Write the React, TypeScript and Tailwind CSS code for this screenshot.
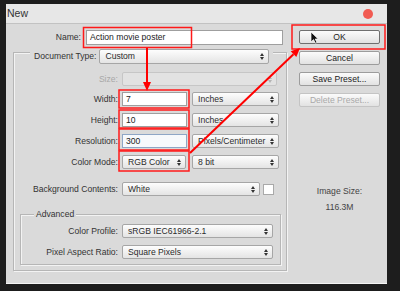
import React from "react";

const sel =
  "flex items-center justify-between pr-[4px] rounded-[2px] border border-[#a6a6a6] bg-gradient-to-b from-[#fdfdfd] to-[#e4e4e4] text-[#2b2b2b]";
const inp = "flex items-center bg-white border border-[#9f9f9f] text-[#222]";
const btn =
  "w-[81px] h-[14px] flex items-center justify-center rounded-[2px] border bg-gradient-to-b from-[#fbfbfb] to-[#e2e2e2]";

function Spin({ dim }: { dim?: boolean }) {
  return (
    <svg width="4" height="7" viewBox="0 0 4 7" className="shrink-0">
      <path d="M0 3 L2 0 L4 3 Z M0 4 L4 4 L2 7 Z" fill={dim ? "#b4b4b4" : "#333"} />
    </svg>
  );
}

function Select({ text, className }: { text: string; className: string }) {
  return (
    <div className={`${sel} ${className}`}>
      <span className="pl-[5px] whitespace-nowrap">{text}</span>
      <Spin />
    </div>
  );
}

function Row({ label, lw, children, className = "" }: { label: string; lw: string; children: React.ReactNode; className?: string }) {
  return (
    <div className={`flex items-center h-[14px] ${className}`}>
      <span className={`${lw} text-right text-[#333] whitespace-nowrap`}>{label}</span>
      <div className="ml-[4px] flex items-center">{children}</div>
    </div>
  );
}

export default function App() {
  return (
    <div className="relative w-[400px] h-[291px] bg-[#1d1d1d] overflow-hidden pl-[6px] pt-[4px] font-['Liberation_Sans',Arial,sans-serif] text-[8.6px] leading-none">
      <div className="w-[381px] h-[279px] bg-[#dadada] flex flex-col shadow-[0_1px_0_#f4f4f4]">
        {/* title bar */}
        <div className="h-[20px] shrink-0 bg-[#e7e7e7] border-b border-[#c2c2c2] flex items-center justify-between pl-[1px] pr-[14px]">
          <span className="text-[10.5px] text-[#333]">New</span>
          <div className="w-[10px] h-[10px] rounded-full bg-[#f15b52]" />
        </div>

        <div className="flex flex-1">
          {/* left */}
          <div className="w-[284px]">
            <div className="mt-[6px] flex items-center h-[15px]">
              <span className="w-[75px] text-right text-[#333]">Name:</span>
              <div className={`${inp} ml-[5px] w-[197px] h-[15px] pl-[3px]`}>Action movie poster</div>
            </div>

            <div className="mt-[7px] ml-[7px] w-[274px] h-[219px] border border-[#b6b6b6] shadow-[inset_1px_1px_0_#f3f3f3,1px_1px_0_#f3f3f3] flex flex-col">
              <div className="-mt-[4px] ml-[16px] w-fit px-[4px] bg-[#dadada] flex items-center h-[15px]">
                <span className="text-[#333]">Document Type:</span>
                <Select text="Custom" className="ml-[3px] w-[170px] h-[15px]" />
              </div>

              <Row label="Size:" lw="w-[104px] !text-[#a8a8a8]" className="mt-[8px]">
                <div className="w-[155px] h-[14px] rounded-[2px] border border-[#c6c6c6] bg-[#e2e2e2] flex items-center justify-end pr-[4px]">
                  <Spin dim />
                </div>
              </Row>

              <Row label="Width:" lw="w-[104px]" className="mt-[6px]">
                <div className={`${inp} w-[65px] h-[14px] pl-[3px]`}>7</div>
                <Select text="Inches" className="ml-[5px] w-[87px] h-[14px]" />
              </Row>

              <Row label="Height:" lw="w-[104px]" className="mt-[7px]">
                <div className={`${inp} w-[65px] h-[14px] pl-[3px]`}>10</div>
                <Select text="Inches" className="ml-[5px] w-[87px] h-[14px]" />
              </Row>

              <Row label="Resolution:" lw="w-[104px]" className="mt-[7px]">
                <div className="flex items-center w-[65px] h-[14px] pl-[3px] bg-[#f7f9fc] border border-[#8ea6c6] text-[#222]">300</div>
                <Select text="Pixels/Centimeter" className="ml-[5px] w-[87px] h-[14px]" />
              </Row>

              <Row label="Color Mode:" lw="w-[104px]" className="mt-[7px]">
                <Select text="RGB Color" className="w-[64px] h-[14px]" />
                <Select text="8 bit" className="ml-[6px] w-[87px] h-[14px]" />
              </Row>

              <Row label="Background Contents:" lw="w-[104px]" className="mt-[13px]">
                <Select text="White" className="w-[138px] h-[14px]" />
                <div className="ml-[3px] w-[11px] h-[11px] bg-white border border-[#a9a9a9]" />
              </Row>

              <div className="mt-[18px] ml-[6px] w-[261px] h-[51px] border border-[#b6b6b6] shadow-[inset_1px_1px_0_#f3f3f3,1px_1px_0_#f3f3f3] flex flex-col">
                <div className="-mt-[6px] ml-[13px] w-fit px-[2px] h-[11px] bg-[#dadada] flex items-center text-[#333]">Advanced</div>
                <Row label="Color Profile:" lw="w-[97px]" className="mt-[4px]">
                  <Select text="sRGB IEC61966-2.1" className="w-[151px] h-[14px]" />
                </Row>
                <Row label="Pixel Aspect Ratio:" lw="w-[97px]" className="mt-[7px]">
                  <Select text="Square Pixels" className="w-[151px] h-[14px]" />
                </Row>
              </div>
            </div>
          </div>

          {/* right */}
          <div className="flex-1 pl-[9px] flex flex-col">
            <div className={`${btn} mt-[6px] border-[#6f6f6f] text-[#222]`}>OK</div>
            <div className={`${btn} mt-[7px] border-[#9c9c9c] text-[#222]`}>Cancel</div>
            <div className={`${btn} mt-[7px] border-[#9c9c9c] text-[#222]`}>Save Preset...</div>
            <div className={`${btn} mt-[7px] border-[#c4c4c4] text-[#a9a9a9]`}>Delete Preset...</div>
            <div className="w-[81px] mt-[80px] text-center text-[#444]">Image Size:</div>
            <div className="w-[81px] mt-[7px] text-center text-[#444]">116.3M</div>
          </div>
        </div>
      </div>

      {/* annotations */}
      <svg className="absolute inset-0 pointer-events-none" width="400" height="291" viewBox="0 0 400 291">
        <g fill="none" stroke="#ff1a1a" strokeWidth="1.5">
          <rect x="83.5" y="27.5" width="108" height="20" />
          <rect x="119" y="90" width="70" height="18" />
          <rect x="119" y="110" width="70" height="18" />
          <rect x="119" y="129" width="70" height="21" />
          <rect x="119" y="151" width="70" height="20" />
          <rect x="292" y="25" width="93" height="24" />
        </g>
        <g stroke="#ff0000" strokeWidth="2" fill="#ff0000">
          <line x1="147" y1="48" x2="147" y2="83" />
          <line x1="190" y1="153" x2="293.5" y2="54.2" />
        </g>
        <polygon points="147,91 143,82 151,82" fill="#ff0000" />
        <polygon points="300,48 296.3,57.1 290.7,51.3" fill="#ff0000" />
        <path
          d="M0 0 L0 10 L2.5 7.6 L4.4 11.2 L6 10.4 L4.2 7 L7.2 7 Z"
          transform="translate(311,32)"
          fill="#111"
          stroke="#fff"
          strokeWidth="0.7"
        />
      </svg>
    </div>
  );
}
